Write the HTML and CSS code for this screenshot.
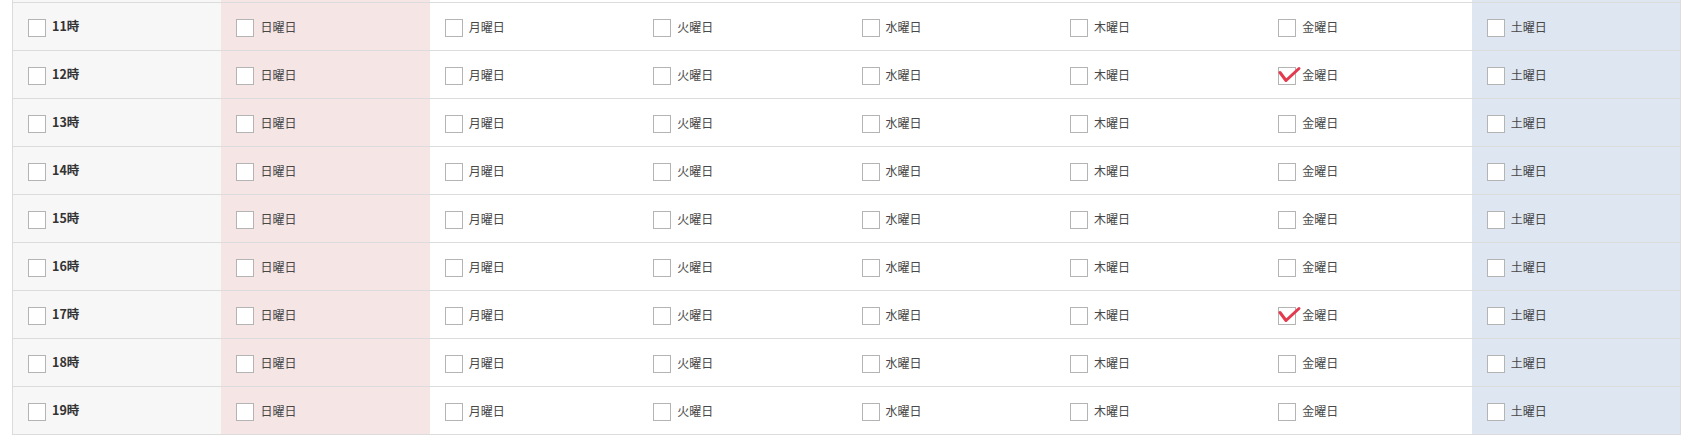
FILE: index.html
```html
<!DOCTYPE html>
<html lang="ja">
<head>
<meta charset="utf-8">
<link rel="stylesheet" href="styles.css">
</head>
<body>
<div class="table" id="table">
  <div class="row spacer">
    <div class="cell hour"></div><div class="cell sun"></div><div class="cell"></div><div class="cell"></div><div class="cell"></div><div class="cell"></div><div class="cell"></div><div class="cell sat"></div>
  </div>
</div>
<script src="app.js"></script>
</body>
</html>
```
FILE: styles.css
```css
html, body { margin: 0; padding: 0; background: #fff; }
body { font-family: "Noto Sans CJK JP", "Noto Sans", sans-serif; }
.table {
  margin: 0 0 0 12px;
  width: 1669px;
  box-sizing: border-box;
  border-left: 1px solid #dcdcdc;
  border-right: 1px solid #dcdcdc;
}
.row {
  display: grid;
  grid-template-columns: repeat(8, 1fr);
  height: 48px;
  box-sizing: border-box;
  border-bottom: 1px solid #dcdcdc;
}
.row.spacer { height: 3px; }
.cell {
  display: flex;
  align-items: center;
  padding-left: 15px;
  gap: 6px;
  font-size: 12px;
  color: #484848;
  background: #fff;
}
.cell.hour { background: #f7f7f7; color: #333; font-weight: 700; font-size: 12.5px; }
.cell.sun { background: #f5e5e5; }
.cell.sat { background: #dee7f1; }
.box {
  position: relative;
  width: 18px;
  height: 18px;
  box-sizing: border-box;
  border: 1px solid #b4b4b4;
  background: #fff;
  margin-top: 3px;
  flex: none;
}
.check {
  position: absolute;
  left: -1px;
  top: -1px;
  width: 23px;
  height: 17px;
  overflow: visible;
}
.label { line-height: 1; }
```
FILE: app.js
```js
const days = ["日曜日","月曜日","火曜日","水曜日","木曜日","金曜日","土曜日"];
const checked = {12: [5], 17: [5]};
const t = document.getElementById("table");
for (let h = 11; h <= 19; h++) {
  const row = document.createElement("div");
  row.className = "row";
  let html = `<div class="cell hour"><span class="box"></span><span class="label">${h}時</span></div>`;
  days.forEach((d, i) => {
    const cls = i === 0 ? " sun" : i === 6 ? " sat" : "";
    const on = (checked[h] || []).includes(i);
    const chk = on ? `<svg class="check" viewBox="0 0 23 17"><path d="M2 5.5 L8 13.5 L21 1.5" fill="none" stroke="#e23a4e" stroke-width="3" stroke-linecap="round" stroke-linejoin="round"/></svg>` : "";
    html += `<div class="cell${cls}"><span class="box">${chk}</span><span class="label">${d}</span></div>`;
  });
  row.innerHTML = html;
  t.appendChild(row);
}
```
